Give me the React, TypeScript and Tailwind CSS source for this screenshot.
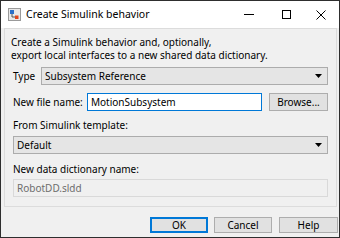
import React from "react";

const font = { fontFamily: '"Noto Sans", "Liberation Sans", sans-serif' };

function Arrow() {
  return (
    <svg width="7" height="4" viewBox="0 0 7 4" className="shrink-0">
      <path d="M0 0 H7 L3.5 4 Z" fill="#000" />
    </svg>
  );
}

export default function App() {
  return (
    <div
      className="w-[340px] h-[238px] border border-[#2e2e2e] bg-[#f0f0f0] flex flex-col text-[10px] text-black overflow-hidden"
      style={font}
    >
      {/* title bar */}
      <div className="h-[27px] bg-white flex items-center shrink-0">
        <svg width="13" height="13" viewBox="0 0 13 13" className="ml-[7px] shrink-0">
          <rect x="0.5" y="0.5" width="12" height="12" fill="#e8e8e8" stroke="#9a9a9a" />
          <rect x="2" y="2" width="4" height="4" fill="#2a6fc9" />
          <path d="M4 6 V9 H8" stroke="#555" fill="none" />
          <rect x="7" y="7.5" width="3.5" height="3.5" fill="#e0461c" />
        </svg>
        <span className="ml-[5px] text-[10.5px] leading-none whitespace-nowrap">Create Simulink behavior</span>
        <div className="ml-auto flex items-center h-full">
          <div className="w-[40px] h-full flex items-center justify-center">
            <div className="w-[10px] h-px bg-black" />
          </div>
          <div className="w-[34px] h-full flex items-center justify-center">
            <div className="w-[9px] h-[9px] border border-black" />
          </div>
          <div className="w-[36px] h-full flex items-center justify-center">
            <svg width="10" height="10" viewBox="0 0 10 10">
              <path d="M0.5 0.5 L9.5 9.5 M9.5 0.5 L0.5 9.5" stroke="#000" strokeWidth="1" />
            </svg>
          </div>
        </div>
      </div>

      {/* panel */}
      <div className="ml-[3px] mr-[2px] h-[179px] border border-[#dcdcdc] flex flex-col px-[8px] pt-[7px] shrink-0">
        <div className="leading-[13px] -ml-[2px] whitespace-nowrap">
          <div>Create a Simulink behavior and, optionally,</div>
          <div>export local interfaces to a new shared data dictionary.</div>
        </div>

        <div className="flex items-center mt-[5px] h-[18px]">
          <span className="w-[28px] shrink-0 whitespace-nowrap">Type</span>
          <div className="flex-1 h-full bg-[#e5e5e5] border border-[#acacac] flex items-center pl-[3px] pr-[5px]">
            <span className="flex-1 whitespace-nowrap">Subsystem Reference</span>
            <Arrow />
          </div>
        </div>

        <div className="flex items-center mt-[8px] h-[18px]">
          <span className="w-[74px] shrink-0 whitespace-nowrap">New file name:</span>
          <div className="w-[175px] shrink-0 h-full bg-white border border-[#0078d7] flex items-center pl-[3px] whitespace-nowrap">
            MotionSubsystem
          </div>
          <div className="ml-[7px] flex-1 h-full bg-[#e1e1e1] border border-[#adadad] flex items-center justify-center whitespace-nowrap">
            Browse...
          </div>
        </div>

        <div className="mt-[7px] leading-[14px] whitespace-nowrap">From Simulink template:</div>
        <div className="mt-[4px] h-[18px] bg-[#e5e5e5] border border-[#acacac] flex items-center pl-[3px] pr-[5px]">
          <span className="flex-1">Default</span>
          <Arrow />
        </div>

        <div className="mt-[8px] leading-[14px] whitespace-nowrap">New data dictionary name:</div>
        <div className="mt-[3px] h-[18px] bg-[#f0f0f0] border border-[#d9d9d9] flex items-center pl-[3px] text-[#6d6d6d]">
          RobotDD.sldd
        </div>
      </div>

      {/* buttons */}
      <div className="flex justify-end mt-[10px] mr-[1px] h-[16px]">
        <div className="w-[58px] h-full bg-[#e1e1e1] border-2 border-[#0078d7] flex items-center justify-center">
          OK
        </div>
        <div className="ml-[6px] w-[58px] h-full bg-[#e1e1e1] border border-[#adadad] flex items-center justify-center">
          Cancel
        </div>
        <div className="ml-[7px] w-[59px] h-full bg-[#e1e1e1] border border-[#adadad] flex items-center justify-center">
          Help
        </div>
      </div>
    </div>
  );
}
